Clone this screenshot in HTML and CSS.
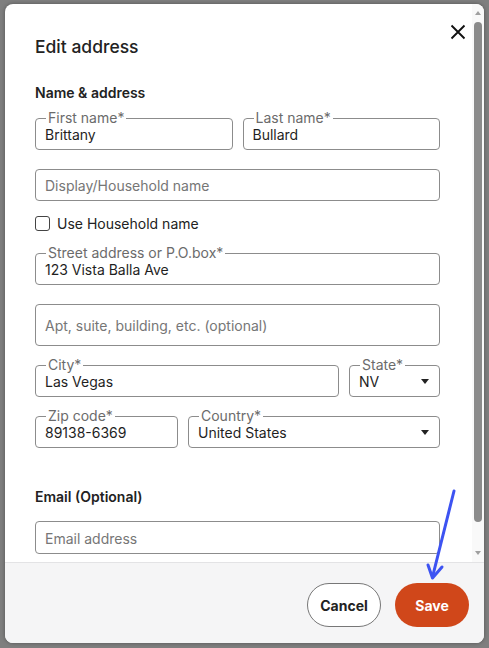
FILE: index.html
```html
<!DOCTYPE html>
<html lang="en">
<head>
<meta charset="utf-8">
<title>Edit address</title>
<link rel="stylesheet" href="styles.css">
</head>
<body>
<div class="backdrop">
  <div class="modal" role="dialog" aria-labelledby="dlg-title">
    <div class="scroll-area">
      <div class="modal-body">
        <div class="modal-head">
          <h2 id="dlg-title" class="title">Edit address</h2>
          <button class="close" type="button" aria-label="Close">
            <svg width="16" height="16" viewBox="0 0 16 16" aria-hidden="true"><path d="M1.5 1.5L14.5 14.5M14.5 1.5L1.5 14.5" stroke="#111" stroke-width="1.9" fill="none"/></svg>
          </button>
        </div>
        <h3 class="section">Name &amp; address</h3>
        <div class="stack">
          <div class="row">
            <div class="field grow"><span class="label">First name*</span><span class="value">Brittany</span></div>
            <div class="field grow"><span class="label">Last name*</span><span class="value">Bullard</span></div>
          </div>
          <div class="group">
            <div class="field"><span class="placeholder">Display/Household name</span></div>
            <label class="check"><span class="box"></span><span>Use Household name</span></label>
          </div>
          <div class="field"><span class="label">Street address or P.O.box*</span><span class="value">123 Vista Balla Ave</span></div>
          <div class="field tall"><span class="placeholder">Apt, suite, building, etc. (optional)</span></div>
          <div class="row">
            <div class="field grow"><span class="label">City*</span><span class="value">Las Vegas</span></div>
            <div class="field state"><span class="label">State*</span><span class="value">NV</span><span class="caret"></span></div>
          </div>
          <div class="row">
            <div class="field zip"><span class="label">Zip code*</span><span class="value">89138-6369</span></div>
            <div class="field grow"><span class="label">Country*</span><span class="value">United States</span><span class="caret"></span></div>
          </div>
        </div>
        <h3 class="section email-head">Email (Optional)</h3>
        <div class="field email"><span class="placeholder">Email address</span></div>
      </div>
      <div class="scrollbar" aria-hidden="true">
        <span class="sb-btn"><span class="sb-up"></span></span>
        <span class="sb-track"><span class="sb-thumb"></span></span>
        <span class="sb-btn"><span class="sb-down"></span></span>
      </div>
    </div>
    <div class="modal-foot">
      <button class="btn btn-cancel" type="button">Cancel</button>
      <button class="btn btn-save" type="button">Save</button>
    </div>
  </div>
  <svg class="annotation" width="489" height="648" viewBox="0 0 489 648" aria-hidden="true">
    <path d="M454 491L432.5 577" stroke="#3d53f2" stroke-width="3" stroke-linecap="round" fill="none"/>
    <path d="M428 565L432.5 578L442 567" stroke="#3d53f2" stroke-width="3" stroke-linecap="round" stroke-linejoin="round" fill="none"/>
  </svg>
</div>
</body>
</html>
```
FILE: styles.css
```css
* { box-sizing: border-box; }
html, body { margin: 0; padding: 0; }
body {
  font-family: Inter, "Liberation Sans", Arial, sans-serif;
  color: #222;
  background: #7f7f7f;
}
.backdrop {
  position: relative;
  width: 489px;
  height: 648px;
  padding: 4px 5px 5px 5px;
  background: #7f7f7f;
  overflow: hidden;
}
.modal {
  width: 479px;
  height: 639px;
  background: #fff;
  border-radius: 8px;
  overflow: hidden;
  display: flex;
  flex-direction: column;
  box-shadow: 0 0 4px rgba(0,0,0,0.35);
}
.scroll-area {
  height: 558px;
  flex: none;
  display: flex;
}
.modal-body {
  flex: 1 1 auto;
  min-width: 0;
  overflow: hidden;
  padding: 29px 32px 32px 30px;
}
.scrollbar {
  width: 12px;
  flex: none;
  display: flex;
  flex-direction: column;
  background: #f9f9f9;
}
.sb-btn {
  height: 16px;
  flex: none;
  display: flex;
  align-items: center;
  justify-content: center;
}
.sb-up, .sb-down {
  width: 0;
  height: 0;
  border-left: 3.5px solid transparent;
  border-right: 3.5px solid transparent;
}
.sb-up { border-bottom: 4px solid #a0a0a0; margin-top: 2px; }
.sb-down { border-top: 4px solid #a0a0a0; margin-bottom: 2px; }
.sb-track { flex: 1 1 auto; padding: 2px 2px; }
.sb-thumb {
  display: block;
  height: 500px;
  border-radius: 4px;
  background: #8b8b8b;
}
.modal-head {
  display: flex;
  justify-content: space-between;
  align-items: flex-start;
}
.title {
  margin: 0;
  font-size: 17.5px;
  font-weight: 500;
  line-height: 28px;
  color: #222;
}
.close {
  width: 16px;
  height: 16px;
  padding: 0;
  border: 0;
  background: transparent;
  margin: -9px -26px 0 0;
  display: block;
}
.close svg { display: block; }
.section {
  margin: 22px 0 15px;
  font-size: 14px;
  font-weight: 600;
  line-height: 20px;
  color: #222;
}
.email-head { margin: 39px 0 14px; }
.stack { display: flex; flex-direction: column; gap: 19px; }
.group { display: flex; flex-direction: column; gap: 12px; }
.row { display: flex; gap: 10px; }
.grow { flex: 1 1 0; min-width: 0; }
.state { width: 91px; flex: none; }
.zip { width: 143px; flex: none; }
.field {
  position: relative;
  height: 32px;
  border: 1px solid #8c8c8c;
  border-radius: 4px;
  display: flex;
  align-items: center;
  padding: 1px 9px 0;
  font-size: 14px;
  line-height: 20px;
  background: #fff;
}
.field.tall { height: 42px; }
.field.email { height: 33px; padding-top: 3px; }
.label {
  position: absolute;
  left: 10px;
  top: -9px;
  padding: 0 2px;
  background: #fff;
  color: #6b6b6b;
  font-size: 14px;
  line-height: 16px;
  white-space: nowrap;
}
.value { color: #1f1f1f; white-space: nowrap; }
.placeholder { color: #767676; white-space: nowrap; }
.caret {
  margin-left: auto;
  margin-right: 1px;
  width: 0;
  height: 0;
  border-left: 4.5px solid transparent;
  border-right: 4.5px solid transparent;
  border-top: 5px solid #222;
}
.check {
  display: flex;
  align-items: center;
  gap: 7px;
  font-size: 14px;
  line-height: 21px;
  color: #222;
}
.box {
  width: 15px;
  height: 15px;
  border: 1.5px solid #444;
  border-radius: 3px;
  background: #fff;
}
.modal-foot {
  flex: none;
  height: 81px;
  border-top: 1px solid #e3e3e5;
  background: #f5f5f6;
  padding: 20px 15px 16px;
  display: flex;
  justify-content: flex-end;
  gap: 14px;
}
.btn {
  width: 74px;
  height: 44px;
  border-radius: 22px;
  font-family: Inter, "Liberation Sans", Arial, sans-serif;
  font-size: 14px;
  font-weight: 700;
  padding: 0;
}
.btn-cancel { background: #fff; border: 1px solid #777; color: #222; }
.btn-save { background: #d0471a; border: 0; color: #fff; }
.annotation {
  position: absolute;
  left: 0;
  top: 0;
  pointer-events: none;
}
```
